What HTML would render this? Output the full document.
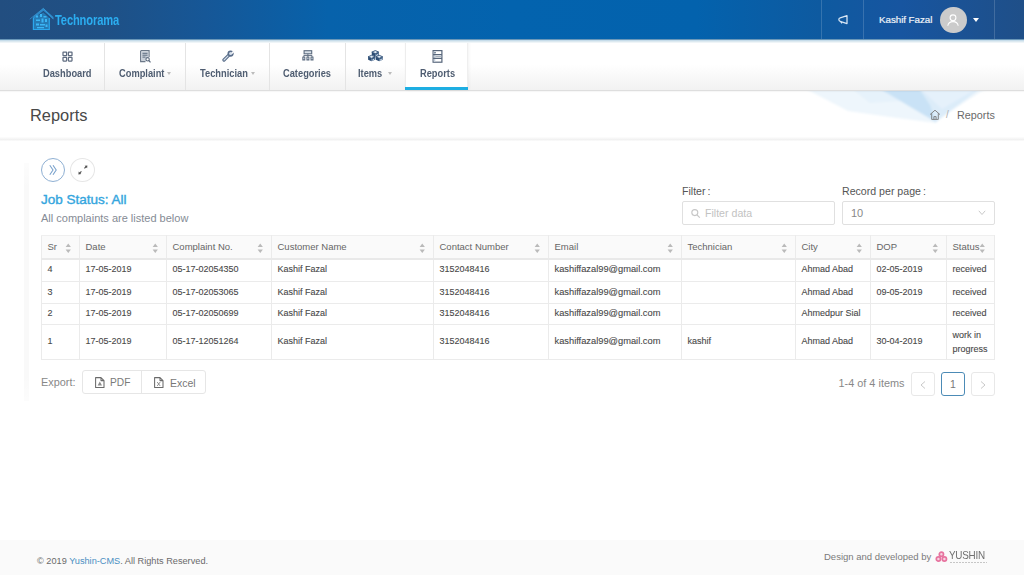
<!DOCTYPE html>
<html><head><meta charset="utf-8">
<style>
*{box-sizing:border-box;margin:0;padding:0}
html,body{width:1024px;height:575px;overflow:hidden;background:#fff;font-family:"Liberation Sans",sans-serif;color:#555}
.abs{position:absolute;white-space:nowrap}
#hdr{position:absolute;left:0;top:0;width:1024px;height:39px;background:linear-gradient(90deg,#224e80 0%,#1f5085 10%,#165797 20%,#0762ab 32%,#0363ae 50%,#0362ad 68%,#0e5aa0 80%,#1755a0 88%,#1f4f88 100%);box-shadow:0 1px 0 #6a97b8,0 2px 0 #c6dcea,0 3px 0 #dce9f0,0 4px 0 #eff5f8;z-index:3}
#nav{position:absolute;left:0;top:39px;width:1024px;height:52px;background:linear-gradient(180deg,#ffffff 0%,#ffffff 50%,#f7f7f7 80%,#f2f2f2 100%);border-bottom:1px solid #dedede;box-shadow:0 1px 1px rgba(0,0,0,0.03);z-index:2}
.sep{position:absolute;top:0;width:1px;height:51px;background:#e4e4e4}
.lb{position:absolute;top:28.6px;font-size:10.1px;font-weight:bold;color:#4f5d71;letter-spacing:0px;transform:scaleX(0.92);transform-origin:0 0}
.ic{position:absolute}
.car{position:absolute;top:33px;width:0;height:0;border-left:2.5px solid transparent;border-right:2.5px solid transparent;border-top:3px solid #bcbcbc}
table{border-collapse:collapse;table-layout:fixed;position:absolute;left:41px;top:235px;width:953px}
td,th{border:1px solid #ebebeb;font-size:9.2px;text-align:left;padding:0 0 0 5.5px;color:#555;font-weight:normal;white-space:nowrap;position:relative}
th{background:#fafafa;color:#666;border-bottom:2px solid #e9e9e9;border-top-color:#efefef;font-size:9.5px}
td{padding-bottom:2px;font-size:9px;color:#484848;-webkit-text-stroke:0.1px #484848}
.srt{position:absolute;right:8px;top:7px;width:6.5px;height:10.5px}
</style></head>
<body>
<div id="hdr">
  <svg class="abs" style="left:28px;top:6px" width="28" height="26" viewBox="0 0 28 26">
    <filter id="hb" x="-20%" y="-20%" width="140%" height="140%"><feGaussianBlur stdDeviation="0.45"/></filter>
    <g filter="url(#hb)">
    <path d="M5 11 L15.4 2.3 L25.5 11 V13.2 L15.4 4.8 L5 13.2Z" fill="#2f8fd0" opacity="0.9"/>
    <path d="M1.8 13.2 L15.4 2.3 L25.3 13.2" fill="none" stroke="#3aa0e0" stroke-width="0.9" opacity="0.75"/>
    <path d="M5.4 12 V23.5 H21.3 V12 L15.4 6.5 Z" fill="#2a9ddf" opacity="0.55"/>
    <path d="M5.4 12 V23.5 H21.3 V12" fill="none" stroke="#2aa7ee" stroke-width="1.2"/>
    <g fill="#3ab6f5">
      <rect x="8" y="9.5" width="2" height="2"/><rect x="12" y="8" width="2" height="3"/><rect x="15.5" y="10" width="3" height="1.5"/>
      <rect x="8" y="13.5" width="4" height="1.5"/><rect x="13.5" y="12.5" width="2" height="4"/><rect x="17" y="13" width="2" height="3"/>
      <rect x="8" y="17.5" width="3" height="2"/><rect x="12" y="18" width="5" height="1.5"/><rect x="17.5" y="18.5" width="2" height="2.5"/>
      <rect x="9" y="21" width="7" height="1.3"/>
    </g>
    </g>
  </svg>
  <div class="abs" style="left:55px;top:11.5px;font-size:14.5px;color:#2badf0;transform:scaleX(0.77);transform-origin:0 0;font-weight:bold;letter-spacing:-0.2px">Technorama</div>
  <div class="abs" style="left:821px;top:0;width:1px;height:39px;background:rgba(255,255,255,0.16)"></div>
  <div class="abs" style="left:863px;top:0;width:1px;height:39px;background:rgba(255,255,255,0.16)"></div>
  <div class="abs" style="left:994px;top:0;width:1px;height:39px;background:rgba(255,255,255,0.16)"></div>
  <svg class="abs" style="left:837px;top:14px" width="12" height="11" viewBox="0 0 12 11">
    <path d="M10 1.6 V9.6 L3.2 7.3 C1.4 6.9 1.4 4.1 3.2 3.8 Z M3.6 7.6 L4.6 9" fill="none" stroke="#d9e7f5" stroke-width="1.25" stroke-linejoin="round" stroke-linecap="round"/>
  </svg>
  <div class="abs" style="left:879px;top:14px;font-size:9.8px;color:#eef3f8;-webkit-text-stroke:0.2px #eef3f8;letter-spacing:-0.05px">Kashif Fazal</div>
  <div class="abs" style="left:940px;top:6.5px;width:26.5px;height:26.5px;border-radius:50%;background:#cbcbcb"></div>
  <svg class="abs" style="left:945.6px;top:12.6px" width="14" height="14" viewBox="0 0 14 14">
    <circle cx="7" cy="4.8" r="2.9" fill="none" stroke="#fff" stroke-width="1.1"/>
    <path d="M1.8 12.8 C2.2 9.8 4.5 8.6 7 8.6 C9.5 8.6 11.8 9.8 12.2 12.8" fill="none" stroke="#fff" stroke-width="1.1"/>
  </svg>
  <div class="abs" style="left:973px;top:17.5px;width:0;height:0;border-left:3.5px solid transparent;border-right:3.5px solid transparent;border-top:4px solid #fff"></div>
</div>

<div id="nav">
  <div class="sep" style="left:104px"></div>
  <div class="sep" style="left:185px"></div>
  <div class="sep" style="left:269px"></div>
  <div class="sep" style="left:345px"></div>
  <div class="abs" style="left:405px;top:0;width:63px;height:51px;background:#fff;border-left:1px solid #ededed;border-right:1px solid #efefef;box-shadow:1px 0 3px rgba(0,0,0,0.05)"></div>
  <div class="abs" style="left:405px;top:48px;width:63px;height:3px;background:#1eaee2"></div>

  <svg class="ic" style="left:62px;top:12px" width="11" height="11" viewBox="0 0 11 11"><g fill="none" stroke="#5f6c80" stroke-width="1.25"><rect x="1" y="1" width="3.6" height="3.6" rx="0.4"/><rect x="6.4" y="1" width="3.6" height="3.6" rx="0.4"/><rect x="1" y="6.4" width="3.6" height="3.6" rx="0.4"/><rect x="6.4" y="6.4" width="3.6" height="3.6" rx="0.4"/></g></svg>
  <div class="lb" style="left:43px">Dashboard</div>

  <svg class="ic" style="left:140px;top:11px" width="11" height="13" viewBox="0 0 11 13"><path d="M0.7 0.7 H9 V7 M0.7 0.7 V11.5 H5.5" fill="none" stroke="#6b7888" stroke-width="1.3"/><rect x="1.4" y="1.4" width="7" height="9.4" fill="#c9d0d9"/><path d="M2.5 3.3h5M2.5 5.2h5M2.5 7.1h3" stroke="#5f6d80" stroke-width="1"/><circle cx="7.6" cy="9.3" r="1.7" fill="#fff" stroke="#5f6d80" stroke-width="1.1"/><path d="M8.8 10.5 L10.5 12.3" stroke="#5f6d80" stroke-width="1.2"/></svg>
  <div class="lb" style="left:119px">Complaint</div><div class="car" style="left:167px"></div>

  <svg class="ic" style="left:222px;top:11px" width="13" height="12" viewBox="0 0 13 12"><path d="M2 10 L6.6 5.4" stroke="#5a6e8a" stroke-width="3.3" stroke-linecap="round"/><path d="M2 10 L6.6 5.4" stroke="#d6e0ec" stroke-width="1.1" stroke-linecap="round"/><circle cx="8.6" cy="3.6" r="3.1" fill="#5a6e8a"/><circle cx="8.6" cy="3.6" r="1.5" fill="#d6e0ec"/><path d="M9.2 3 L11.5 0.2 L12.8 1.6 L10.2 4Z" fill="#fbfbfb"/></svg>
  <div class="lb" style="left:200px">Technician</div><div class="car" style="left:251px"></div>

  <svg class="ic" style="left:302px;top:11px" width="12" height="12" viewBox="0 0 12 12"><rect x="2.1" y="0.7" width="7.6" height="3.1" fill="#d9e0e8" stroke="#5d6c80" stroke-width="1.1"/><path d="M5.9 3.8 V5.5 M1.8 7 V5.5 H10 V7 M5.9 5.5 V7" fill="none" stroke="#5d6c80" stroke-width="0.9"/><g fill="#5d6c80"><rect x="0.3" y="6.6" width="3" height="3.9"/><rect x="4.4" y="6.6" width="3" height="3.9"/><rect x="8.5" y="6.6" width="3" height="3.9"/></g><g fill="#c9d3de"><rect x="1.2" y="7.6" width="1.2" height="1.6"/><rect x="5.3" y="7.6" width="1.2" height="1.6"/><rect x="9.4" y="7.6" width="1.2" height="1.6"/></g></svg>
  <div class="lb" style="left:283px">Categories</div>

  <svg class="ic" style="left:367px;top:11.2px" width="17" height="14" viewBox="0 0 17 14"><path d="M4.800000000000001 2.1 L8.3 3.6 L8.3 6.6 L4.800000000000001 5.1Z" fill="#2b4c74"/><path d="M8.3 3.6 L11.8 2.1 L11.8 5.1 L8.3 6.6Z" fill="#3e5f86"/><path d="M8.3 0.6000000000000001 L11.8 2.1 L8.3 3.6 L4.800000000000001 2.1Z" fill="#e2ecf6" stroke="#2b4c74" stroke-width="0.9" stroke-linejoin="round"/><path d="M9.0 4.95 L10.925 3.9000000000000004 L10.925 4.95 L9.0 6.0Z" fill="#dbe7f3"/><path d="M1.0999999999999996 6.800000000000001 L4.6 8.3 L4.6 11.3 L1.0999999999999996 9.8Z" fill="#2b4c74"/><path d="M4.6 8.3 L8.1 6.800000000000001 L8.1 9.8 L4.6 11.3Z" fill="#3e5f86"/><path d="M4.6 5.300000000000001 L8.1 6.800000000000001 L4.6 8.3 L1.0999999999999996 6.800000000000001Z" fill="#e2ecf6" stroke="#2b4c74" stroke-width="0.9" stroke-linejoin="round"/><path d="M5.3 9.65 L7.225 8.600000000000001 L7.225 9.65 L5.3 10.700000000000001Z" fill="#dbe7f3"/><path d="M8.7 6.800000000000001 L12.2 8.3 L12.2 11.3 L8.7 9.8Z" fill="#2b4c74"/><path d="M12.2 8.3 L15.7 6.800000000000001 L15.7 9.8 L12.2 11.3Z" fill="#3e5f86"/><path d="M12.2 5.300000000000001 L15.7 6.800000000000001 L12.2 8.3 L8.7 6.800000000000001Z" fill="#e2ecf6" stroke="#2b4c74" stroke-width="0.9" stroke-linejoin="round"/><path d="M12.899999999999999 9.65 L14.825 8.600000000000001 L14.825 9.65 L12.899999999999999 10.700000000000001Z" fill="#dbe7f3"/></svg>
  <div class="lb" style="left:358px">Items</div><div class="car" style="left:388px"></div>

  <svg class="ic" style="left:432px;top:11px" width="11" height="13" viewBox="0 0 11 13"><rect x="1.1" y="0.6" width="8.8" height="11.6" fill="none" stroke="#56657a" stroke-width="1.2"/><rect x="1.7" y="1.2" width="1.6" height="10.4" fill="#c5d0dc"/><path d="M1.1 4.6h8.8M1.1 8.4h8.8" stroke="#56657a" stroke-width="1.2"/><path d="M3.3 6.5h6" stroke="#a9b4c0" stroke-width="1.2"/><rect x="2.4" y="2" width="1.3" height="1.3" fill="#56657a"/></svg>
  <div class="lb" style="left:419.5px">Reports</div>
</div>

<!-- decorative polygon -->
<svg class="abs" style="left:790px;top:91px" width="215" height="45" viewBox="0 0 215 45">
  <defs><filter id="bl" x="-10%" y="-30%" width="120%" height="160%"><feGaussianBlur stdDeviation="1.1"/></filter></defs>
  <g filter="url(#bl)">
  <polygon points="12,-4 206,-4 192,0 150,27 146,32 100,26 58,20" fill="#eef6fc"/>
  <polygon points="60,-4 120,-4 110,10 80,12" fill="#e6f2fb"/>
  <polygon points="87,-4 192,-4 146,31" fill="#dcecf9"/>
  <polygon points="87,-4 128,-4 140,14 146,31" fill="#c9e2f6"/>
  <polygon points="128,-4 190,-4 152,18" fill="#e5f1fb"/>
  </g>
</svg>

<div class="abs" style="left:30px;top:105.8px;font-size:16.4px;color:#484848">Reports</div>
<svg class="abs" style="left:929px;top:109px" width="12" height="11" viewBox="0 0 12 11"><path d="M1 5.6 L6 1.2 L11 5.6 M2.7 4.3 V10.4 H9.3 V4.3 M4.9 10.4 V7.6 H7.1 V10.4" fill="none" stroke="#7a7a7a" stroke-width="0.9" stroke-linejoin="round"/></svg>
<div class="abs" style="left:946px;top:108.5px;font-size:10px;color:#b0b0b0">/</div>
<div class="abs" style="left:957px;top:108.7px;font-size:10.8px;color:#6a6a6a">Reports</div>
<div class="abs" style="left:0;top:137px;width:1024px;height:4px;background:linear-gradient(180deg,#fdfdfd,#f6f6f6 40%,#f1f1f1 65%,#fcfcfc)"></div>

<!-- card shadow left -->
<div class="abs" style="left:24px;top:163px;width:5px;height:238px;background:linear-gradient(180deg,rgba(0,0,0,0.01),rgba(0,0,0,0.025) 10%,rgba(0,0,0,0.025) 90%,rgba(0,0,0,0.01))"></div>

<div class="abs" style="left:41px;top:158px;width:24px;height:24px;border-radius:50%;border:1px solid #8fb0d3"></div>
<svg class="abs" style="left:48px;top:164px" width="10" height="12" viewBox="0 0 10 12"><path d="M1.8 1.2 L5 6 L1.8 10.8 M5 1.2 L8.2 6 L5 10.8" fill="none" stroke="#7aa2cc" stroke-width="1.1"/></svg>
<div class="abs" style="left:70px;top:158px;width:25px;height:24px;border-radius:50%;border:1px solid #e6e6e6"></div>
<svg class="abs" style="left:77px;top:164px" width="12" height="12" viewBox="0 0 12 12"><g fill="#505050"><path d="M10.4 1.4 L10.1 4.2 L7.6 1.7Z"/><path d="M1.4 10.4 L1.7 7.6 L4.2 10.1Z"/></g><path d="M9.3 2.5 L7.4 4.4 M2.5 9.3 L4.4 7.4" stroke="#505050" stroke-width="1.1"/></svg>

<div class="abs" style="left:41px;top:192px;font-size:13.5px;color:#35a6de;-webkit-text-stroke:0.4px #35a6de">Job Status: All</div>
<div class="abs" style="left:41px;top:212px;font-size:11px;color:#858b95">All complaints are listed below</div>

<div class="abs" style="left:682px;top:185.4px;font-size:10.6px;color:#555">Filter<span style="margin-left:2px">:</span></div>
<div class="abs" style="left:682px;top:201px;width:153px;height:24px;border:1px solid #e0e0e0;border-radius:2px"></div>
<svg class="abs" style="left:691px;top:209px" width="10" height="9" viewBox="0 0 10 9"><circle cx="3.8" cy="3.6" r="3" fill="none" stroke="#c6c6c6" stroke-width="1.1"/><path d="M6 5.8 L8.8 8.6" stroke="#c6c6c6" stroke-width="1.2"/></svg>
<div class="abs" style="left:705px;top:207px;font-size:10.6px;color:#c2c2c2">Filter data</div>

<div class="abs" style="left:842px;top:185.4px;font-size:10.6px;color:#555">Record per page<span style="margin-left:2px">:</span></div>
<div class="abs" style="left:842px;top:201px;width:153px;height:24px;border:1px solid #e0e0e0;border-radius:2px"></div>
<div class="abs" style="left:851px;top:206.5px;font-size:11px;color:#888">10</div>
<svg class="abs" style="left:978px;top:210px" width="8" height="6" viewBox="0 0 8 6"><path d="M0.8 0.8 L4 4.5 L7.2 0.8" fill="none" stroke="#c8c8c8" stroke-width="1"/></svg>

<table>
<colgroup><col style="width:38px"><col style="width:87px"><col style="width:105px"><col style="width:162px"><col style="width:115px"><col style="width:133px"><col style="width:114px"><col style="width:75px"><col style="width:76px"><col style="width:48px"></colgroup>
<tr style="height:23px">
<th>Sr<svg class="srt" viewBox="0 0 6 10"><path d="M3 0.5 L5.5 3.8 H0.5Z M3 9.5 L5.5 6.2 H0.5Z" fill="#bababa"/></svg></th>
<th>Date<svg class="srt" viewBox="0 0 6 10"><path d="M3 0.5 L5.5 3.8 H0.5Z M3 9.5 L5.5 6.2 H0.5Z" fill="#bababa"/></svg></th>
<th>Complaint No.<svg class="srt" viewBox="0 0 6 10"><path d="M3 0.5 L5.5 3.8 H0.5Z M3 9.5 L5.5 6.2 H0.5Z" fill="#bababa"/></svg></th>
<th>Customer Name<svg class="srt" viewBox="0 0 6 10"><path d="M3 0.5 L5.5 3.8 H0.5Z M3 9.5 L5.5 6.2 H0.5Z" fill="#bababa"/></svg></th>
<th>Contact Number<svg class="srt" viewBox="0 0 6 10"><path d="M3 0.5 L5.5 3.8 H0.5Z M3 9.5 L5.5 6.2 H0.5Z" fill="#bababa"/></svg></th>
<th>Email<svg class="srt" viewBox="0 0 6 10"><path d="M3 0.5 L5.5 3.8 H0.5Z M3 9.5 L5.5 6.2 H0.5Z" fill="#bababa"/></svg></th>
<th>Technician<svg class="srt" viewBox="0 0 6 10"><path d="M3 0.5 L5.5 3.8 H0.5Z M3 9.5 L5.5 6.2 H0.5Z" fill="#bababa"/></svg></th>
<th>City<svg class="srt" viewBox="0 0 6 10"><path d="M3 0.5 L5.5 3.8 H0.5Z M3 9.5 L5.5 6.2 H0.5Z" fill="#bababa"/></svg></th>
<th>DOP<svg class="srt" viewBox="0 0 6 10"><path d="M3 0.5 L5.5 3.8 H0.5Z M3 9.5 L5.5 6.2 H0.5Z" fill="#bababa"/></svg></th>
<th>Status<svg class="srt" style="right:9px" viewBox="0 0 6 10"><path d="M3 0.5 L5.5 3.8 H0.5Z M3 9.5 L5.5 6.2 H0.5Z" fill="#bababa"/></svg></th>
</tr>
<tr style="height:23px"><td>4</td><td>17-05-2019</td><td>05-17-02054350</td><td>Kashif Fazal</td><td>3152048416</td><td style="font-size:9.3px">kashiffazal99@gmail.com</td><td></td><td>Ahmad Abad</td><td>02-05-2019</td><td>received</td></tr>
<tr style="height:22px"><td>3</td><td>17-05-2019</td><td>05-17-02053065</td><td>Kashif Fazal</td><td>3152048416</td><td style="font-size:9.3px">kashiffazal99@gmail.com</td><td></td><td>Ahmad Abad</td><td>09-05-2019</td><td>received</td></tr>
<tr style="height:21px"><td>2</td><td>17-05-2019</td><td>05-17-02050699</td><td>Kashif Fazal</td><td>3152048416</td><td style="font-size:9.3px">kashiffazal99@gmail.com</td><td></td><td>Ahmedpur Sial</td><td></td><td>received</td></tr>
<tr style="height:35px"><td>1</td><td>17-05-2019</td><td>05-17-12051264</td><td>Kashif Fazal</td><td>3152048416</td><td style="font-size:9.3px">kashiffazal99@gmail.com</td><td>kashif</td><td>Ahmad Abad</td><td>30-04-2019</td><td style="white-space:normal;line-height:14px;padding-top:2px">work in progress</td></tr>
</table>

<div class="abs" style="left:41px;top:376px;font-size:10.9px;color:#888">Export:</div>
<div class="abs" style="left:82px;top:370px;width:124px;height:24px;border:1px solid #e6e6e6;border-radius:3px"></div>
<div class="abs" style="left:141px;top:370px;width:1px;height:24px;background:#e6e6e6"></div>
<svg class="abs" style="left:94.5px;top:377px" width="10" height="11" viewBox="0 0 10 11"><path d="M0.6 0.6 H6 L9 3.6 V10.4 H0.6 Z M6 0.6 V3.6 H9" fill="none" stroke="#6a6a6a" stroke-width="1.05" stroke-linejoin="round"/><path d="M2.6 8.6 L4.8 4.6 L7 8.6 Z" fill="#8a8a8a"/></svg>
<div class="abs" style="left:110px;top:377px;font-size:10.2px;color:#7a7a7a">PDF</div>
<svg class="abs" style="left:153.8px;top:377px" width="10" height="11" viewBox="0 0 10 11"><path d="M0.6 0.6 H6 L9 3.6 V10.4 H0.6 Z M6 0.6 V3.6 H9" fill="none" stroke="#6a6a6a" stroke-width="1.05" stroke-linejoin="round"/><path d="M3.2 5 L6.2 9 M6.2 5 L3.2 9" fill="none" stroke="#777" stroke-width="0.8"/></svg>
<div class="abs" style="left:170px;top:376.5px;font-size:10.5px;color:#777">Excel</div>

<div class="abs" style="left:838.5px;top:376.5px;font-size:10.9px;color:#888">1-4 of 4 items</div>
<div class="abs" style="left:911px;top:372px;width:24px;height:24px;border:1px solid #e8e8e8;border-radius:3px"></div>
<svg class="abs" style="left:920px;top:381px" width="6" height="8" viewBox="0 0 6 8"><path d="M5 0.5 L1 4 L5 7.5" fill="none" stroke="#c8c8c8" stroke-width="1"/></svg>
<div class="abs" style="left:941px;top:372px;width:24px;height:24px;border:1px solid #4c8bb6;border-radius:3px"></div>
<div class="abs" style="left:950px;top:378px;font-size:10.5px;color:#777">1</div>
<div class="abs" style="left:971px;top:372px;width:24px;height:24px;border:1px solid #e8e8e8;border-radius:3px"></div>
<svg class="abs" style="left:980px;top:381px" width="6" height="8" viewBox="0 0 6 8"><path d="M1 0.5 L5 4 L1 7.5" fill="none" stroke="#c8c8c8" stroke-width="1"/></svg>

<div class="abs" style="left:0;top:540px;width:1024px;height:35px;background:#fafafa"></div>
<div class="abs" style="left:37px;top:556px;font-size:9.2px;color:#6a6a6a">&copy; 2019 <span style="color:#4a8fc2">Yushin-CMS</span>. All Rights Reserved.</div>
<div class="abs" style="left:824px;top:551px;font-size:9.5px;color:#7a7a7a">Design and developed by</div>
<svg class="abs" style="left:935px;top:551px" width="13" height="12" viewBox="0 0 13 12"><g fill="#f6d3e1" stroke="#e7739f" stroke-width="1.7"><circle cx="6.4" cy="3.3" r="2.1"/><circle cx="3.4" cy="8" r="2.1"/><circle cx="9.4" cy="8" r="2.1"/></g></svg>
<div class="abs" style="left:949px;top:549px;font-size:11px;color:#707070;letter-spacing:-0.3px;transform:scaleX(0.9);transform-origin:0 0">YUSHIN</div>
<div class="abs" style="left:950px;top:561.5px;width:37px;height:1.5px;background:repeating-linear-gradient(90deg,#888 0 2px,transparent 2px 3px);opacity:0.45"></div>
</body></html>
